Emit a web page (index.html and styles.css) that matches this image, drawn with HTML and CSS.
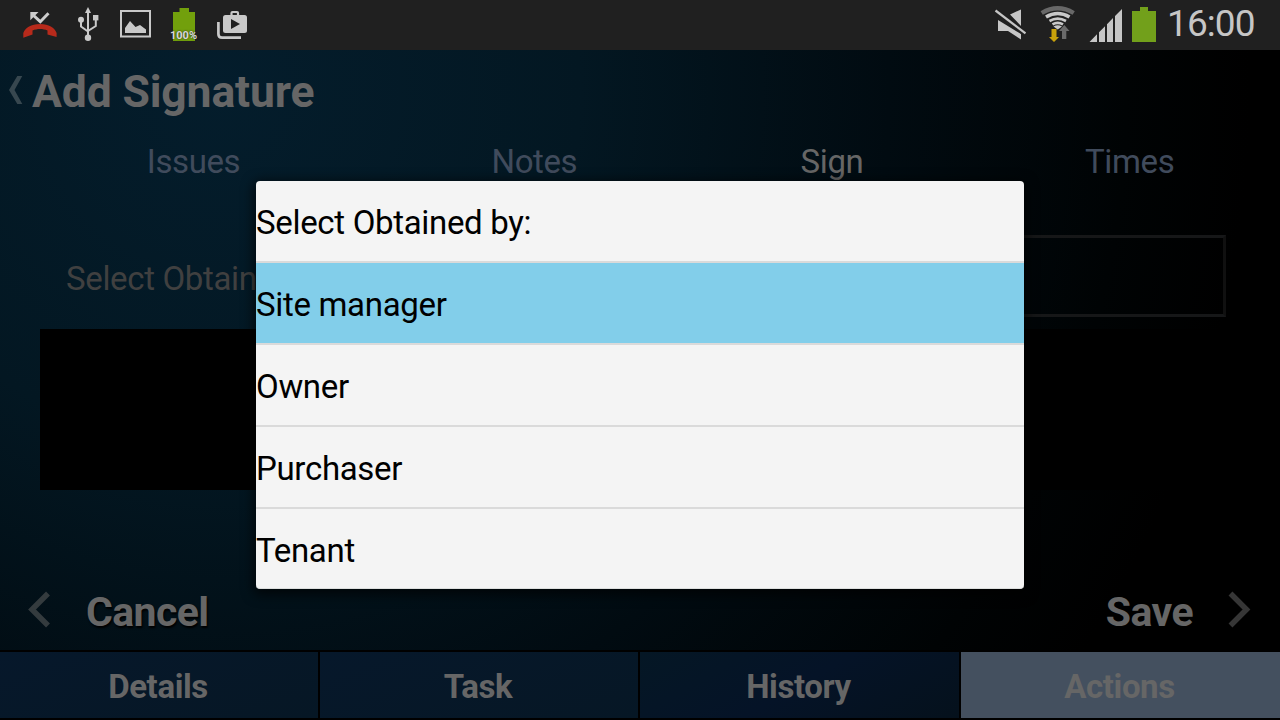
FILE: index.html
```html
<!DOCTYPE html>
<html lang="en">
<head>
<meta charset="utf-8">
<title>Add Signature</title>
<link rel="stylesheet" href="styles.css">
</head>
<body>
<div class="device">
  <div class="status">
    <div class="status-group notifications">
      <svg width="38" height="50" viewBox="21 0 38 50">
        <path d="M48.500 13.300 40.300 21.700 33 15" fill="none" stroke="#cdcdcd" stroke-width="3"/>
        <path d="M30.300 12H38.500L30.300 20.200Z" fill="#cdcdcd"/>
        <path d="M23.300 37.800V33C25.500 27.500 31 24 40 24S54.500 27.500 56.600 33V37L47.500 34.500V30.500C43 28.500 37 28.500 32.500 30.500V34.500Z" fill="#b72a1b"/>
      </svg>
      <svg width="26" height="50" viewBox="75 0 26 50">
        <g fill="none" stroke="#c9c9c9" stroke-width="2"><path d="M88 11V38M81 20V26.500L88 31.500M95.800 18V26L88 31"/></g>
        <g fill="#c9c9c9"><path d="M88 7 91 13H85Z"/><circle cx="81" cy="19.700" r="3"/><rect x="93" y="15" width="5.400" height="5.400"/><circle cx="88" cy="37.800" r="3.200"/></g>
      </svg>
      <svg width="34" height="50" viewBox="118 0 34 50">
        <rect x="121" y="11" width="29" height="25.500" fill="none" stroke="#c9c9c9" stroke-width="2"/>
        <path d="M125 33V28L130 21 135.500 27 140 25 146 29.500V33Z" fill="#c9c9c9"/>
      </svg>
      <div class="charge">
        <svg width="22" height="50" viewBox="173 0 22 50"><path d="M173 12H179.500V8H189V12H195V41H173Z" fill="#72a00c"/></svg>
        <span class="charge-label">100%</span>
      </div>
      <svg width="34" height="50" viewBox="215 0 34 50">
        <path d="M218.400 22V34Q218.400 37.600 222 37.600H241" fill="none" stroke="#c9c9c9" stroke-width="2.700"/>
        <rect x="223" y="15" width="24" height="18" rx="2.500" fill="#c9c9c9"/>
        <path d="M231.500 15.500V13Q231.500 12 232.500 12H237Q238 12 238 13V15.500" fill="none" stroke="#c9c9c9" stroke-width="2.200"/>
        <path d="M231 19 240 24 231 29Z" fill="#202020"/>
      </svg>
    </div>
    <div class="status-group system">
      <svg width="34" height="50" viewBox="994 0 34 50">
        <path d="M998 20V31H1008L1021 39.500V34ZM1010 14.500 1021 9.500V26Z" fill="#c6c6c6"/>
        <path d="M995.500 11 1025.500 33.500" stroke="#202020" stroke-width="5.500"/>
        <path d="M995.500 10.500 1025.500 33.300" stroke="#c6c6c6" stroke-width="2.200"/>
      </svg>
      <svg width="36" height="50" viewBox="1040 0 36 50">
        <g fill="none" stroke="#c9c9c9" stroke-width="2.600">
          <path d="M1041.700 13Q1057.700 3.500 1073.700 13" stroke="#686868" stroke-width="4.300"/>
          <path d="M1046 17Q1057.700 10 1069.500 17" stroke-width="3.600"/>
          <path d="M1049.500 21Q1057.700 16.300 1066 21"/>
          <path d="M1052.500 24.400Q1057.700 21.300 1063 24.400"/>
        </g>
        <path d="M1053.500 26.500Q1057.700 24 1062 26.500L1057.700 29.500Z" fill="#c9c9c9"/>
        <path d="M1051.500 29H1056.500V37H1059L1054 42 1049 37H1051.500Z" fill="#c9a20b"/>
        <path d="M1062 39H1066.300V31H1069.500L1064.300 25 1059 31H1062Z" fill="#6b6b6b"/>
      </svg>
      <svg width="34" height="50" viewBox="1089 0 34 50">
        <path d="M1089.500 42 1097 34.300V42ZM1099 32.300 1105 26.200V42H1099ZM1107 24.200 1113 18V42H1107ZM1115 16 1122 9V42H1115Z" fill="#c6c6c6"/>
      </svg>
      <svg width="24" height="50" viewBox="1132 0 24 50"><path d="M1132 11H1140V7H1148V11H1156V42H1132Z" fill="#72a01b"/></svg>
      <span class="clock">16:00</span>
    </div>
  </div>

  <div class="screen">
    <header class="title-bar">
      <svg width="24" height="40" viewBox="0 70 24 40"><path d="M17.300 76H22.300L14.500 90 22.300 104H17.300L9 90Z" fill="#37474f"/></svg>
      <h1 class="title">Add Signature</h1>
    </header>
    <nav class="tabs">
      <span class="tab tab-first">Issues</span>
      <span class="tab">Notes</span>
      <span class="tab tab-active">Sign</span>
      <span class="tab">Times</span>
    </nav>
    <div class="field">
      <span class="field-label">Select Obtain</span>
      <div class="field-box"></div>
    </div>
    <div class="pad"></div>
    <div class="buttons">
      <div class="button">
        <svg width="24" height="40" viewBox="27 590 24 40"><path d="M48 593.500 32 609.500 48 625.500" fill="none" stroke="#343b3e" stroke-width="5.500"/></svg>
        <span class="button-label">Cancel</span>
      </div>
      <div class="button button-next">
        <span class="button-label">Save</span>
        <svg width="24" height="40" viewBox="1227 590 24 40"><path d="M1230.500 593.500 1246.500 609.500 1230.500 625.500" fill="none" stroke="#363636" stroke-width="5.500"/></svg>
      </div>
    </div>
    <nav class="bottom">
      <span class="bottom-item">Details</span>
      <span class="bottom-item">Task</span>
      <span class="bottom-item">History</span>
      <span class="bottom-item bottom-active">Actions</span>
    </nav>
  </div>

  <div class="dialog">
    <div class="option">Select Obtained by:</div>
    <div class="option option-selected">Site manager</div>
    <div class="option">Owner</div>
    <div class="option">Purchaser</div>
    <div class="option">Tenant</div>
  </div>
</div>
</body>
</html>
```

FILE: styles.css
```css
* { box-sizing: border-box; }
body { margin: 0; font-family: Roboto, "Liberation Sans", sans-serif; background: #000; }
svg { display: block; flex: none; }
.device { position: relative; width: 1280px; height: 720px; overflow: hidden; display: flex; flex-direction: column; }

.status { height: 50px; background: #202020; display: flex; justify-content: space-between; }
.status-group { display: flex; }
.notifications { padding-left: 21px; }
.notifications > svg:nth-child(2) { margin-left: 16px; }
.notifications > svg:nth-child(3) { margin-left: 17px; }
.charge { position: relative; margin: 0 20px 0 21px; }
.charge-label { position: absolute; left: -3px; top: 30px; font-size: 11px; line-height: 12px; font-weight: 700; color: #d8d8d8; text-shadow: 0 0 2px #222; }
.system { width: 286px; }
.system > svg:nth-child(2) { margin-left: 12px; }
.system > svg:nth-child(3) { margin-left: 13px; }
.system > svg:nth-child(4) { margin-left: 9px; }
.clock { margin-left: 11px; font-size: 37px; line-height: 48px; letter-spacing: -0.9px; color: #c6c6c6; }

.screen { flex: 1; display: flex; flex-direction: column; background: radial-gradient(circle 1030px at 220px 40px, #041d2c 0%, #031722 35%, #010b11 65%, #000304 88%, #000 100%); }
.title-bar { height: 82px; display: flex; align-items: center; }
.title-bar svg { margin-top: -2px; }
.title { margin: 2px 0 0 8px; font-size: 44.5px; line-height: 52px; letter-spacing: -0.15px; font-weight: 700; color: #666; }
.tabs { height: 58px; display: flex; font-size: 33px; line-height: 60px; letter-spacing: -0.4px; color: #404b5c; }
.tab { flex: 1; text-align: center; padding-right: 3px; }
.tab-first { flex: 0 0 387px; padding-right: 0; }
.tab-active { color: #666; }
.field { height: 139px; padding: 45px 54px 12px 66px; display: flex; }
.field-label { flex: 0 0 334px; padding-top: 25px; white-space: nowrap; font-size: 33px; line-height: 38px; letter-spacing: -0.35px; color: #404040; }
.field-box { flex: 1; border: 3px solid #161718; border-right-color: #101010; }
.pad { height: 161px; margin: 0 40px; background: #000; }
.buttons { height: 160px; padding: 100px 29px 20px 27px; display: flex; justify-content: space-between; }
.button { display: flex; align-items: center; gap: 35px; font-size: 41px; line-height: 44px; letter-spacing: -0.6px; font-weight: 700; color: #666; text-shadow: 1px 2px 2px #000; }
.button-next { gap: 34px; }
.button-label { padding-top: 3px; }
.bottom { height: 70px; padding: 2px 0; background: #000; display: grid; grid-template-columns: 318px 318px 319px 319px; gap: 2px; }
.bottom-item { background: linear-gradient(160deg, #06182b, #061725); font-size: 33px; line-height: 66px; padding: 2px 2px 0 0; height: 66px; letter-spacing: -0.4px; font-weight: 700; text-align: center; color: #666; }
.bottom-item:nth-child(3) { background: linear-gradient(150deg, #051725, #051327 50%, #05111c); }
.bottom .bottom-active { background: #44505f; }

.dialog { position: absolute; left: 256px; top: 181px; width: 768px; height: 408px; border-radius: 4px; overflow: hidden; background: #f4f4f4; box-shadow: 0 3px 12px 3px rgba(0, 0, 0, .65); border-bottom: 1px solid #dcdedd; }
.option { height: 82px; border-bottom: 2px solid #dadada; font-size: 33px; line-height: 83px; letter-spacing: -0.32px; color: #000; }
.option:last-child { border: 0; }
.option-selected { background: #82ceea; }
```
